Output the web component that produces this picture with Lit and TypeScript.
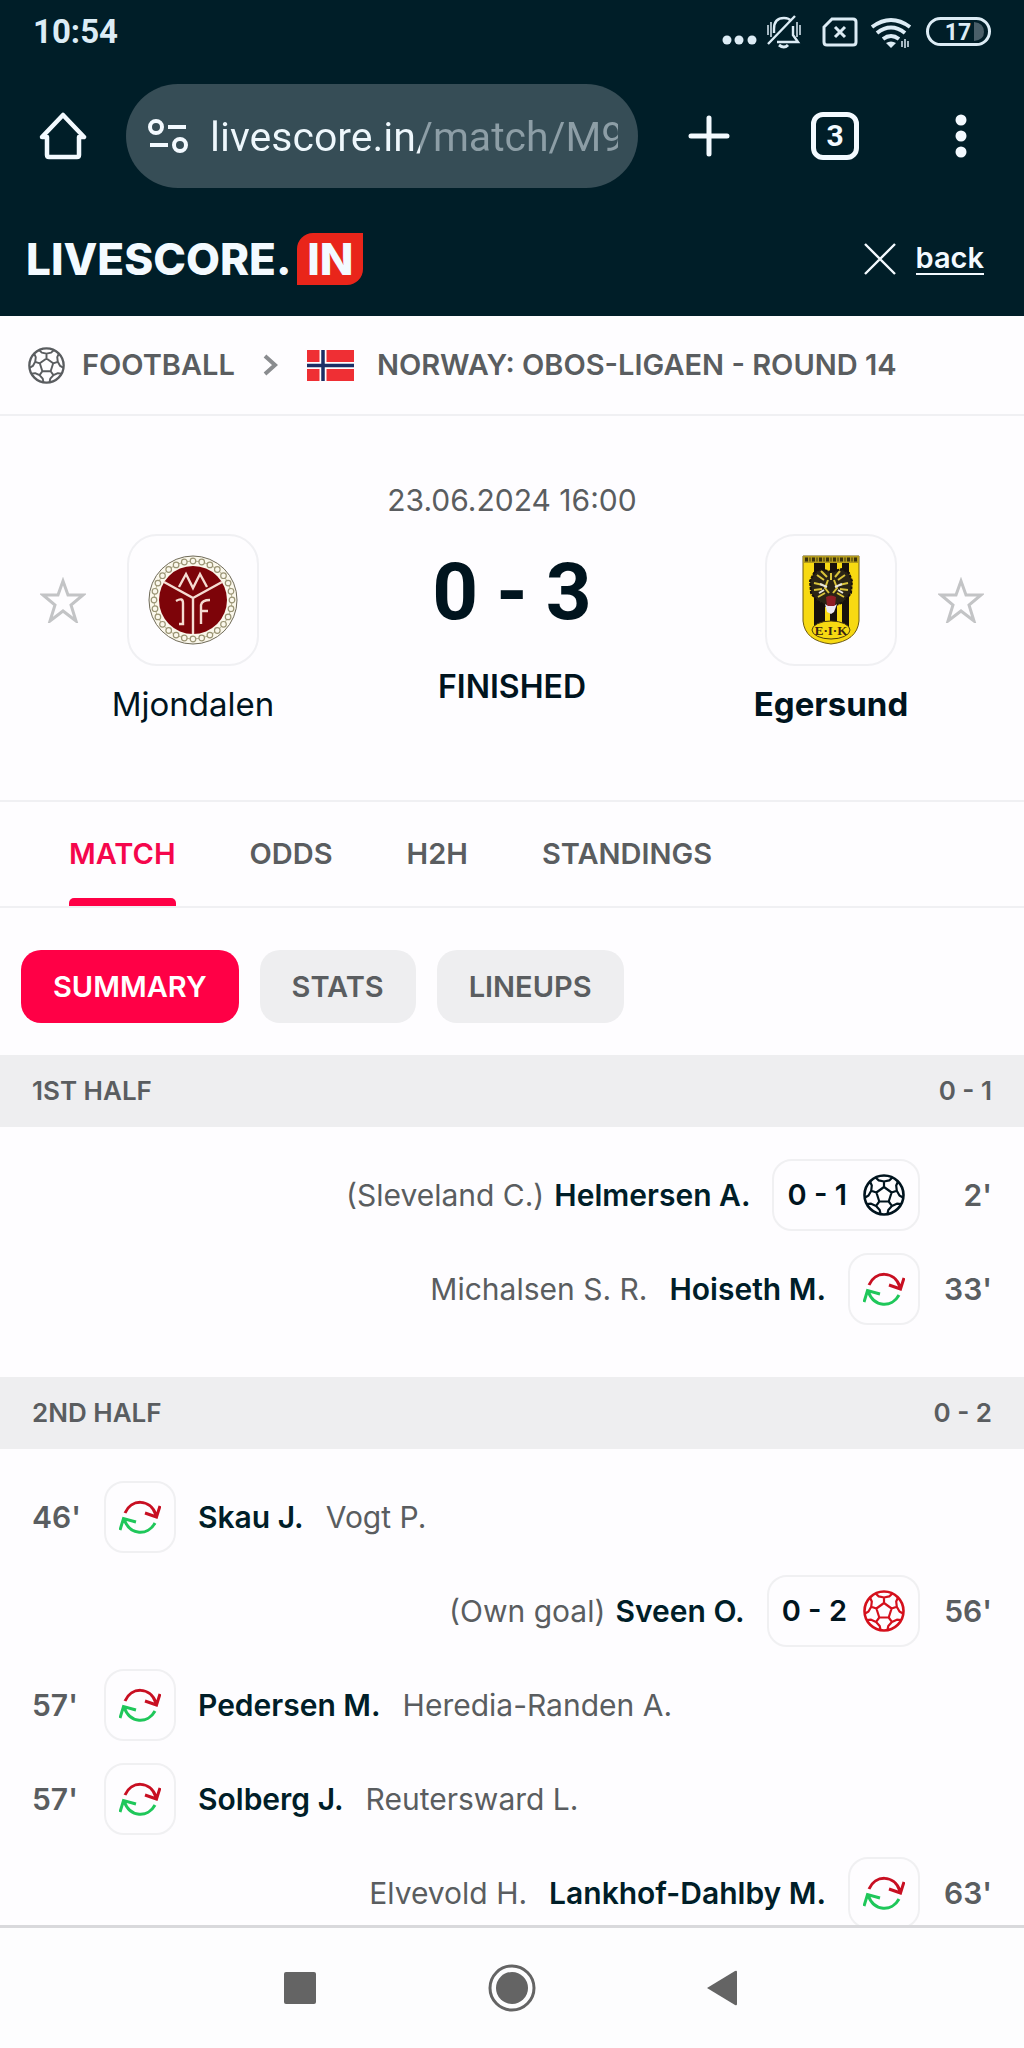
import { LitElement, html, css, svg, nothing } from 'lit'
import { customElement, property, state } from 'lit/decorators.js'
import { classMap } from 'lit/directives/class-map.js'

type Side = 'home' | 'away'

interface MatchEvent {
  side: Side
  time: string
  player: string
  extra: string
  kind: 'sub' | 'goal' | 'own'
  score?: string
}

interface Period {
  name: string
  score: string
  events: MatchEvent[]
}

const PERIODS: Period[] = [
  {
    name: '1ST HALF',
    score: '0 - 1',
    events: [
      { side: 'away', time: "2'", player: 'Helmersen A.', extra: '(Sleveland C.)', kind: 'goal', score: '0 - 1' },
      { side: 'away', time: "33'", player: 'Hoiseth M.', extra: 'Michalsen S. R.', kind: 'sub' },
    ],
  },
  {
    name: '2ND HALF',
    score: '0 - 2',
    events: [
      { side: 'home', time: "46'", player: 'Skau J.', extra: 'Vogt P.', kind: 'sub' },
      { side: 'away', time: "56'", player: 'Sveen O.', extra: '(Own goal)', kind: 'own', score: '0 - 2' },
      { side: 'home', time: "57'", player: 'Pedersen M.', extra: 'Heredia-Randen A.', kind: 'sub' },
      { side: 'home', time: "57'", player: 'Solberg J.', extra: 'Reutersward L.', kind: 'sub' },
      { side: 'away', time: "63'", player: 'Lankhof-Dahlby M.', extra: 'Elvevold H.', kind: 'sub' },
    ],
  },
]

const polar = (r: number, deg: number) => {
  const a = (deg * Math.PI) / 180
  return `${(r * Math.cos(a)).toFixed(1)} ${(r * Math.sin(a)).toFixed(1)}`
}

// centre pentagon, five spokes, and at the end of each the panel cut by the rim
const BALL_PATH =
  [0, 1, 2, 3, 4].map(i => `${i ? 'L' : 'M'}${polar(8, i * 72 - 90)}`).join('') +
  'Z' +
  [0, 1, 2, 3, 4]
    .map(i => {
      const a = i * 72 - 90
      return `M${polar(8, a)}L${polar(13.5, a)}M${polar(19.5, a - 26)}L${polar(15.5, a - 20)}L${polar(13.5, a)}L${polar(15.5, a + 20)}L${polar(19.5, a + 26)}`
    })
    .join('')

const ball = html`
  <svg class="ball" viewBox="-21 -21 42 42" fill="none" stroke="currentColor" stroke-width="2.200" stroke-linejoin="round" aria-hidden="true">
    <circle r="19.5" stroke-width="2.600" />
    <path d=${BALL_PATH} />
  </svg>
`

const swap = html`
  <svg class="swap" viewBox="0 0 42 34" fill="none" stroke-width="3" aria-hidden="true">
    <path stroke="#c80f22" d="M6 13C12-1 31-2 37 15M26 13l11.500 4L41 6" />
    <path stroke="#1fc75a" d="M36 23C29 36 11 36 5 19M1 30l3.500-11.500L17 22" />
  </svg>
`

const star = html`
  <svg width="46" height="46" viewBox="0 0 46 46" fill="none" stroke="#c3c4c6" stroke-width="3" aria-hidden="true">
    <path d="M23 4l5 14h15L31 28l5 16-13-10-13 10 5-16L3 18h15z" />
  </svg>
`

@customElement('match-event')
export class MatchEventRow extends LitElement {
  @property({ attribute: false }) event!: MatchEvent

  static styles = css`
    :host { display: block; }
    .row {
      display: flex;
      align-items: center;
      gap: 22px;
      color: #5a5d60;
    }
    .away { flex-direction: row-reverse; }
    .lead {
      display: flex;
      align-items: center;
    }
    .away .lead { flex-direction: row-reverse; }
    .time {
      width: 72px;
      font-weight: 600;
    }
    .away .time { text-align: right; }
    .box {
      box-sizing: border-box;
      min-width: 72px;
      height: 72px;
      padding: 0 13px;
      display: flex;
      align-items: center;
      justify-content: center;
      gap: 16px;
      border: 2px solid #f0f0f2;
      border-radius: 20px;
      color: #00141e;
      font-weight: 600;
      font-size: 29px;
      white-space: nowrap;
    }
    .names {
      display: flex;
      gap: 22px;
    }
    .away .names { flex-direction: row-reverse; }
    .scored .names { gap: 10px; }
    .player {
      color: #001e28;
      font-weight: 600;
    }
    .own .ball { color: #d5101c; }
    .ball {
      display: block;
      width: 42px;
      height: 42px;
    }
    .swap {
      display: block;
      width: 42px;
      height: 34px;
    }
  `

  render() {
    const { side, time, player, extra, kind, score } = this.event
    return html`
      <div class=${classMap({ row: true, away: side === 'away', scored: kind !== 'sub', own: kind === 'own' })}>
        <div class="lead">
          <span class="time">${time}</span>
          <span class="box">
            ${score ? html`<span>${score}</span>` : nothing}
            ${kind === 'sub' ? swap : ball}
          </span>
        </div>
        <div class="names">
          <span class="player">${player}</span>
          <span>${extra}</span>
        </div>
      </div>
    `
  }
}

@customElement('app-root')
export class AppRoot extends LitElement {
  @state() private tab = 'MATCH'
  @state() private view = 'SUMMARY'

  static styles = css`
    :host {
      display: flex;
      flex-direction: column;
      height: 100vh;
      overflow: hidden;
      background: #fefdff;
      color: #00141e;
      font: 400 30px/40px Inter, sans-serif;
    }
    button {
      border: none;
      background: none;
      padding: 0;
      font: inherit;
      color: inherit;
      cursor: pointer;
    }
    a {
      color: inherit;
      text-decoration: none;
    }
    svg {
      display: block;
      flex: none;
    }
    header {
      flex: none;
      background: #001e28;
      color: #f3faff;
    }

    .status {
      display: flex;
      align-items: center;
      justify-content: space-between;
      height: 64px;
      padding: 0 33px;
      font: 700 33px/40px Roboto, sans-serif;
      color: #dcecf5;
    }

    .toolbar {
      display: flex;
      align-items: center;
      padding-top: 20px;
    }
    .toolbar button {
      width: 126px;
      height: 104px;
      display: grid;
      place-items: center;
    }
    .omnibox {
      flex: 1;
      display: flex;
      align-items: center;
      gap: 20px;
      height: 104px;
      min-width: 0;
      margin-right: 8px;
      padding: 0 20px;
      border-radius: 52px;
      background: #364d56;
    }
    /* the host part is bright, the path after it is dimmed */
    .omnibox input {
      flex: 1;
      min-width: 0;
      height: 56px;
      padding: 2px 0 0;
      border: none;
      outline: none;
      font: 400 41px/56px Roboto, sans-serif;
      background: linear-gradient(90deg, #eef7fc 210px, #8d9ea6 210px);
      -webkit-background-clip: text;
      background-clip: text;
      color: transparent;
    }
    .toolbar .tabs-count {
      width: 48px;
      height: 48px;
      border: 5px solid #f3faff;
      box-sizing: border-box;
      border-radius: 12px;
      display: grid;
      place-items: center;
      font: 700 30px/36px Roboto, sans-serif;
    }

    .brand {
      display: flex;
      align-items: center;
      justify-content: space-between;
      height: 114px;
      padding: 14px 40px 0 26px;
    }
    .logo {
      display: flex;
      align-items: center;
      gap: 6px;
      font: 800 44px/52px Inter, sans-serif;
    }
    .logo .in {
      width: 66px;
      text-align: center;
      background: #e9251a;
      border-radius: 16px 0 16px 0;
    }
    .back {
      display: flex;
      align-items: center;
      gap: 20px;
      font-weight: 600;
      font-size: 29px;
    }
    .back span {
      border-bottom: 2px solid #f3faff;
      line-height: 30px;
    }

    main {
      flex: 1;
      min-height: 0;
      overflow: hidden;
    }
    .crumbs {
      display: flex;
      align-items: center;
      height: 98px;
      padding: 0 28px;
      border-bottom: 2px solid #f0f0f3;
      color: #5a5d60;
      font-weight: 600;
      font-size: 29px;
      white-space: nowrap;
    }
    .crumbs .ball {
      width: 37px;
      height: 37px;
      margin-right: 17px;
    }
    .crumbs .chevron { margin: 0 28px; }
    .crumbs .flag { margin-right: 23px; }

    .match {
      display: grid;
      grid-template-columns: 46px 174px 1fr 174px 46px;
      column-gap: 20px;
      justify-items: center;
      padding: 64px 40px 76px;
    }
    .date {
      grid-column: 1 / -1;
      margin-bottom: 14px;
      color: #5a5d60;
    }
    .fav {
      height: 132px;
    }
    .team {
      display: grid;
      justify-items: center;
      gap: 18px;
      font-size: 33px;
      white-space: nowrap;
    }
    .crest {
      box-sizing: border-box;
      width: 132px;
      height: 132px;
      display: grid;
      place-items: center;
      border: 2px solid #f0f0f3;
      border-radius: 30px;
    }
    .winner { font-weight: 700; }
    .result {
      display: grid;
      justify-items: center;
      align-content: start;
      gap: 35px;
      padding-top: 18px;
    }
    .score {
      display: flex;
      gap: 18px;
      font: 700 80px/80px Roboto, sans-serif;
    }
    .finished {
      font-weight: 600;
      font-size: 32px;
    }

    .tabs {
      display: flex;
      gap: 74px;
      padding: 0 69px;
      border-top: 2px solid #f0f0f3;
      border-bottom: 2px solid #f0f0f3;
      color: #5a5d60;
      font-weight: 600;
      font-size: 29px;
    }
    .tabs button {
      display: flex;
      flex-direction: column;
      justify-content: space-between;
      height: 104px;
      padding: 32px 0 0;
    }
    .tabs button::after {
      content: '';
      width: 100%;
      height: 8px;
      border-radius: 5px 5px 0 0;
    }
    .tabs .on { color: #f5064c; }
    .tabs .on::after { background: #ff0046; }
    .views {
      display: flex;
      gap: 21px;
      padding: 42px 21px 32px;
    }
    .views button {
      height: 73px;
      padding: 0 32px;
      border-radius: 20px;
      background: #eeeef0;
      color: #5a5d60;
      font-weight: 600;
      font-size: 29px;
    }
    .views .on {
      background: #ff0046;
      color: #fff;
    }

    .period {
      display: flex;
      justify-content: space-between;
      align-items: center;
      height: 72px;
      padding: 0 32px;
      background: #eeeef0;
      color: #5a5d60;
      font-weight: 600;
      font-size: 26px;
      margin: 0;
    }
    .events {
      display: grid;
      gap: 22px;
      margin: 0;
      padding: 32px 32px 52px;
      list-style: none;
    }

    .navbar {
      flex: none;
      display: flex;
      justify-content: center;
      gap: 84px;
      height: 120px;
      border-top: 3px solid #d9d9dc;
      background: #fdfdfe;
      color: #646464;
    }
    .navbar button {
      width: 128px;
      display: grid;
      place-items: center;
    }
  `

  render() {
    return html`
      <header>
        ${this.renderStatus()}
        ${this.renderToolbar()}
        <div class="brand">
          <a class="logo" href="#" aria-label="Livescore.in"><span>LIVESCORE.</span><span class="in">IN</span></a>
          <a class="back" href="#back">
            <svg width="32" height="32" viewBox="0 0 32 32" stroke="currentColor" stroke-width="2.400"><path d="M1 1l30 30M31 1L1 31" /></svg>
            <span>back</span>
          </a>
        </div>
      </header>
      <main>
        ${this.renderCrumbs()}
        ${this.renderMatch()}
        <nav class="tabs">
          ${['MATCH', 'ODDS', 'H2H', 'STANDINGS'].map(
            t => html`<button class=${classMap({ on: t === this.tab })} @click=${() => (this.tab = t)}>${t}</button>`
          )}
        </nav>
        <div class="views">
          ${['SUMMARY', 'STATS', 'LINEUPS'].map(
            v => html`<button class=${classMap({ on: v === this.view })} @click=${() => (this.view = v)}>${v}</button>`
          )}
        </div>
        ${PERIODS.map(
          p => html`
            <h2 class="period"><span>${p.name}</span><span>${p.score}</span></h2>
            <ul class="events">
              ${p.events.map(e => html`<li><match-event .event=${e}></match-event></li>`)}
            </ul>
          `
        )}
      </main>
      <div class="navbar">
        <button aria-label="Recent apps">
          <svg width="32" height="32"><rect width="32" height="32" rx="2" fill="currentColor" /></svg>
        </button>
        <button aria-label="Home screen">
          <svg width="48" height="48" viewBox="0 0 48 48">
            <circle cx="24" cy="24" r="22" fill="none" stroke="currentColor" stroke-width="3" />
            <circle cx="24" cy="24" r="16" fill="currentColor" />
          </svg>
        </button>
        <button aria-label="Back">
          <svg width="36" height="36"><path d="M1 18L29 1q2-1 2 1v32q0 2-2 1z" fill="currentColor" /></svg>
        </button>
      </div>
    `
  }

  private renderStatus() {
    return html`
      <div class="status">
        <span>10:54</span>
        <svg width="270" height="40" viewBox="0 0 270 40" fill="none" stroke="currentColor" stroke-width="3" aria-hidden="true">
          <g fill="currentColor" stroke="none">
            <circle cx="6" cy="28" r="4.500" /><circle cx="18" cy="28" r="4.500" /><circle cx="31" cy="28" r="4.500" />
          </g>
          <g stroke-width="2.400">
            <path d="M53 21V17q0-11 10-11q5 0 7 3M72 14v9l5 7H56M47 32L74 4" />
            <path d="M58 33q5 4 9 0" stroke-width="3" />
            <path d="M47 13v10M50 10v15M76 10v15M79 13v10" stroke-width="1.500" />
          </g>
          <path d="M111 7H132q3 0 3 3V30q0 3-3 3H106q-3 0-3-3V15z" />
          <path d="M114 15l10 10M124 15l-10 10" />
          <g stroke-width="4">
            <path d="M151 15q19-14 38 0M156 21q14-11 28 0M162 27q8-6 16 0" />
          </g>
          <path d="M165 31q5-3 10 0l-5 5z" fill="currentColor" stroke="none" />
          <path d="M181 29v6M184 27v9M187 29v6" stroke-width="1.500" />
          <path d="M253 10q10 1 10 10q0 8-10 9z" fill="#4a5f69" stroke="none" />
          <rect x="206.500" y="6.500" width="62" height="26" rx="13" />
          <text x="237" y="28" text-anchor="middle" fill="currentColor" stroke="none" font-family="Roboto" font-size="23" font-weight="700">17</text>
        </svg>
      </div>
    `
  }

  private renderToolbar() {
    return html`
      <div class="toolbar">
        <button aria-label="Home">
          <svg width="48" height="48" viewBox="0 0 48 48" fill="none" stroke="currentColor" stroke-width="4.500" stroke-linejoin="round">
            <path d="M8 25H3L24 3l21 22h-5v18q0 2-2 2H10q-2 0-2-2z" />
          </svg>
        </button>
        <div class="omnibox">
          <svg width="44" height="36" viewBox="0 0 44 36" fill="none" stroke="#f3faff" stroke-width="4">
            <circle cx="10" cy="9" r="6" /><path d="M22 9h18M4 27h18" /><circle cx="34" cy="27" r="6" />
          </svg>
          <input type="text" aria-label="Address" value="livescore.in/match/M9" />
        </div>
        <button aria-label="New tab">
          <svg width="42" height="42" stroke="currentColor" stroke-width="5" stroke-linecap="round"><path d="M21 3v36M3 21h36" /></svg>
        </button>
        <button aria-label="Open tabs"><span class="tabs-count">3</span></button>
        <button aria-label="Menu">
          <svg width="12" height="44" fill="currentColor">
            <circle cx="6" cy="6" r="5.500" /><circle cx="6" cy="22" r="5.500" /><circle cx="6" cy="38" r="5.500" />
          </svg>
        </button>
      </div>
    `
  }

  private renderCrumbs() {
    return html`
      <nav class="crumbs">
        ${ball}
        <a href="#football">FOOTBALL</a>
        <svg class="chevron" width="16" height="22" fill="none" stroke="#8a8c8f" stroke-width="4"><path d="M2 2l10 9-10 9" /></svg>
        <svg class="flag" width="47" height="31">
          <rect width="47" height="31" fill="#ef2f34" />
          <path d="M0 15.500h47M16 0v31" stroke="#fff" stroke-width="7" />
          <path d="M0 15.500h47M16 0v31" stroke="#1b2f66" stroke-width="3.500" />
        </svg>
        <a href="#obos-ligaen">NORWAY: OBOS-LIGAEN - ROUND 14</a>
      </nav>
    `
  }

  private renderMatch() {
    return html`
      <section class="match">
        <span class="date">23.06.2024 16:00</span>
        <button class="fav" aria-label="Follow Mjondalen">${star}</button>
        <div class="team">
          <span class="crest">${this.mjondalen()}</span>
          <span>Mjondalen</span>
        </div>
        <div class="result">
          <div class="score"><span>0</span><span>-</span><span>3</span></div>
          <span class="finished">FINISHED</span>
        </div>
        <div class="team winner">
          <span class="crest">${this.egersund()}</span>
          <span>Egersund</span>
        </div>
        <button class="fav" aria-label="Follow Egersund">${star}</button>
      </section>
    `
  }

  private mjondalen() {
    const links = Array.from({ length: 28 }, (_, i) => polar(39, (i * 360) / 28).split(' '))
    return html`
      <svg width="90" height="90" viewBox="-45 -45 90 90" fill="none" aria-hidden="true">
        <circle r="44" fill="#fbf8ec" stroke="#6f6a58" />
        <circle r="39" stroke="#b9b391" />
        ${links.map(([x, y]) => svg`<circle cx=${x} cy=${y} r="2.800" fill="#fbf8ec" stroke="#9a9474" stroke-width="1.200" />`)}
        <circle r="34" fill="#7d0409" />
        <g stroke="#f5dcd2" stroke-width="2.400">
          <path d="M0 34V-2L-29-18M0-2L29-18" />
          <path d="M-14-13L-7-26L0-12L7-26L14-13" />
          <path d="M-17 1Q-10-3-10 3V24H-14M8 24V5Q9 0 17 0M8 11h7" />
        </g>
      </svg>
    `
  }

  private egersund() {
    return html`
      <svg width="58" height="90" viewBox="0 0 58 90" aria-hidden="true">
        <path d="M1 1H57V66Q55 86 29 89Q3 86 1 66z" fill="#f7d912" stroke="#6e5a10" />
        <path d="M12 8H23V72H12zM28 8H35V72H28zM40 8H47V72H40z" fill="#17100c" />
        <rect x="1" y="1" width="56" height="7" fill="#b39b1c" />
        <path d="M3 4.500H55" stroke="#39300c" stroke-width="4" stroke-dasharray="3 1.500 1 1.500" />
        <path d="M12 18L18 14L29 17L40 14L47 18L50 26L49 38L42 47L34 50L29 58L23 50L15 46L9 38L8 26z" fill="#2a2415" stroke="#17100c" stroke-width="2" stroke-dasharray="3 1" />
        <g fill="none" stroke="#d9c33a" stroke-width="2">
          <path d="M15 20l7 5M19 16l6 6M29 18v7M43 20l-7 5M38 16l-5 6M12 28l9 2M46 28l-9 2M12 35l8-1M46 35l-8-1M16 42l7-4M42 42l-7-4" />
          <path d="M26 25l-3 8 4 5M32 25l3 8-4 5" />
        </g>
        <path d="M18 29l7 3M40 29l-7 3M17 38l5-3M41 38l-5-3" stroke="#e8e6dc" stroke-width="2" />
        <path d="M24 42Q29 39 34 42L33 51H25z" fill="#8d1e24" />
        <path d="M23 49l3 2h6l3-2-3 8-3 2-4-2z" fill="#eeeaf5" />
        <ellipse cx="29" cy="75" rx="19" ry="9" fill="#f7d912" stroke="#4c3d10" />
        <text x="29" y="80" text-anchor="middle" font-family="Liberation Serif" font-size="13" font-weight="700" fill="#3a2410">E·I·K</text>
      </svg>
    `
  }
}
